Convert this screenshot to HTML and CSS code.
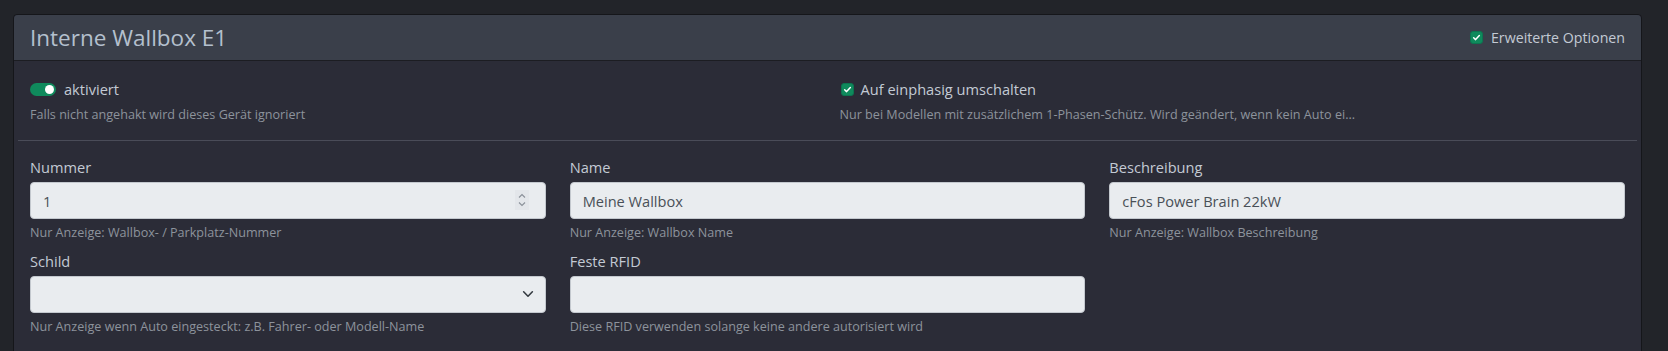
FILE: index.html
```html
<!DOCTYPE html>
<html lang="de">
<head>
    <meta charset="UTF-8">
    <meta name="viewport" content="width=device-width, initial-scale=1.0">
    <link rel="stylesheet" href="styles.css">
    <title>Interne Wallbox E1</title>
</head>
<body>

    <div class="card">
        <div class="card-header">
            <h4 class="card-title">Interne Wallbox E1</h4>
            <label class="check-label header-check">
                <span class="check-box">
                    <svg viewBox="0 0 12 12" width="9" height="9"><path d="M2.2 6.3 4.8 8.8 9.8 3.4" fill="none" stroke="#fff" stroke-width="2" stroke-linecap="round" stroke-linejoin="round"/></svg>
                </span>
                Erweiterte Optionen
            </label>
        </div>

        <div class="card-body">
            <div class="row-two">
                <div class="col">
                    <label class="check-label switch-label">
                        <span class="switch"><span class="knob"></span></span>
                        aktiviert
                    </label>
                    <div class="form-text">Falls nicht angehakt wird dieses Gerät ignoriert</div>
                </div>
                <div class="col">
                    <label class="check-label">
                        <span class="check-box">
                            <svg viewBox="0 0 12 12" width="9" height="9"><path d="M2.2 6.3 4.8 8.8 9.8 3.4" fill="none" stroke="#fff" stroke-width="2" stroke-linecap="round" stroke-linejoin="round"/></svg>
                        </span>
                        Auf einphasig umschalten
                    </label>
                    <div class="form-text">Nur bei Modellen mit zusätzlichem 1-Phasen-Schütz. Wird geändert, wenn kein Auto ei...</div>
                </div>
            </div>

            <hr class="divider">

            <div class="row-three">
                <div class="field">
                    <label class="form-label" for="nummer">Nummer</label>
                    <div class="control-wrap">
                        <input class="form-control" type="number" id="nummer" value="1">
                        <!-- Pfeile des Zahlenfelds -->
                        <svg class="spin" viewBox="0 0 14 20" width="14" height="20"><path d="M4 7.5 7 4.5 10 7.5M4 12.5 7 15.5 10 12.5" fill="none" stroke="#8a9099" stroke-width="1.1"/></svg>
                    </div>
                    <div class="form-text">Nur Anzeige: Wallbox- / Parkplatz-Nummer</div>
                </div>
                <div class="field">
                    <label class="form-label" for="name">Name</label>
                    <input class="form-control" type="text" id="name" value="Meine Wallbox">
                    <div class="form-text">Nur Anzeige: Wallbox Name</div>
                </div>
                <div class="field">
                    <label class="form-label" for="beschreibung">Beschreibung</label>
                    <input class="form-control" type="text" id="beschreibung" value="cFos Power Brain 22kW">
                    <div class="form-text">Nur Anzeige: Wallbox Beschreibung</div>
                </div>
                <div class="field">
                    <label class="form-label" for="schild">Schild</label>
                    <div class="control-wrap">
                        <select class="form-control form-select" id="schild">
                            <option></option>
                        </select>
                        <svg class="chevron" viewBox="0 0 16 16" width="14" height="14"><path d="M3 5.5 8 10.5 13 5.5" fill="none" stroke="#343a40" stroke-width="1.8" stroke-linecap="round" stroke-linejoin="round"/></svg>
                    </div>
                    <div class="form-text">Nur Anzeige wenn Auto eingesteckt: z.B. Fahrer- oder Modell-Name</div>
                </div>
                <div class="field">
                    <label class="form-label" for="rfid">Feste RFID</label>
                    <input class="form-control" type="text" id="rfid" value="">
                    <div class="form-text">Diese RFID verwenden solange keine andere autorisiert wird</div>
                </div>
            </div>
        </div>
    </div>

</body>
</html>
```

FILE: styles.css
```css
body {
    margin: 0;
    font-family: 'Open Sans', 'Noto Sans', sans-serif;
    font-size: 14.6px;
    background-color: #222429;
    color: #c3cad4;
    overflow: hidden;
}

.card {
    margin: 14px 26px 0 13px;
    background-color: #2b2c37;
    border: 1px solid #15161a;
    border-radius: 4px;
    height: 400px;
}

.card-header {
    display: flex;
    align-items: center;
    justify-content: space-between;
    padding: 8px 16px;
    background-color: #3a3f4a;
    border-bottom: 1px solid #1c1d22;
    border-radius: 4px 4px 0 0;
}

.card-title {
    margin: 0;
    font-size: 22.5px;
    font-weight: 400;
    line-height: 29px;
    color: #b4c0ce;
}

.card-body {
    padding: 16px 16px 0;
}

/* Kontrollkästchen und Schalter */
.check-label {
    display: flex;
    align-items: center;
    gap: 7px;
    line-height: 24px;
    color: #c3cad4;
}

.header-check {
    font-size: 14.2px;
    gap: 8px;
}

.switch-label {
    gap: 8px;
}

.check-box {
    display: inline-flex;
    align-items: center;
    justify-content: center;
    width: 13px;
    height: 13px;
    background-color: #0f8a5c;
    border: 1px solid #0c7550;
    border-radius: 3px;
    box-sizing: border-box;
}

.switch {
    position: relative;
    display: inline-block;
    width: 26px;
    height: 13px;
    background-color: #0f8a5c;
    border-radius: 7px;
}

.knob {
    position: absolute;
    top: 2px;
    right: 2px;
    width: 9px;
    height: 9px;
    background-color: #fff;
    border-radius: 50%;
}

.row-two {
    display: grid;
    grid-template-columns: 1fr 1fr;
    column-gap: 24px;
}

.row-two .col:last-child .check-label {
    padding-left: 1px;
}

.form-text {
    font-size: 12.6px;
    line-height: 18px;
    margin-top: 5px;
    color: #8d939c;
}

.divider {
    margin: 16px -12px 15px;
    border: 0;
    border-top: 1px solid #4a4c58;
}

.row-three {
    display: grid;
    grid-template-columns: repeat(3, 1fr);
    column-gap: 24px;
    row-gap: 8px;
}

.form-label {
    display: block;
    line-height: 22px;
    margin-bottom: 4px;
    color: #c3cad4;
}

.control-wrap {
    position: relative;
}

.form-control {
    display: block;
    width: 100%;
    height: 37px;
    box-sizing: border-box;
    padding: 6px 12px;
    font-family: inherit;
    font-size: 14.6px;
    color: #495057;
    background-color: #e9ecef;
    border: 1px solid #c3c8ce;
    border-radius: 4px;
    appearance: none;
    -webkit-appearance: none;
    -moz-appearance: textfield;
    outline: none;
}

.form-control::-webkit-inner-spin-button,
.form-control::-webkit-outer-spin-button {
    -webkit-appearance: none;
    margin: 0;
}

.spin {
    position: absolute;
    right: 17px;
    top: 8px;
    background-color: #e3e6ea;
}

.chevron {
    position: absolute;
    right: 11px;
    top: 11px;
}

.field .form-text {
    margin-top: 5px;
}
```
